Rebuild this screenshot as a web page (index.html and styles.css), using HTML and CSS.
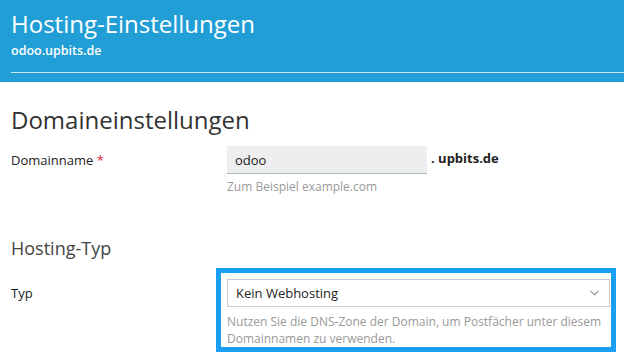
FILE: index.html
```html
<!DOCTYPE html>
<html lang="de">
<head>
    <meta charset="UTF-8">
    <title>Hosting-Einstellungen</title>
    <link rel="stylesheet" href="styles.css">
</head>
<body>
    <header class="pageHeader">
        <div class="headerInner">
            <h1>Hosting-Einstellungen</h1>
            <div class="subtitle">odoo.upbits.de</div>
        </div>
    </header>

    <main class="content">
        <h2 class="sectionTitle">Domaineinstellungen</h2>
        <div class="formRow">
            <label class="fieldLabel">Domainname <span class="required">*</span></label>
            <div class="fieldBox">
                <div class="domainLine">
                    <input class="textInput" type="text" value="odoo">
                    <span class="domainSuffix">. upbits.de</span>
                </div>
                <div class="hint">Zum Beispiel example.com</div>
            </div>
        </div>

        <h3 class="subTitle">Hosting-Typ</h3>
        <div class="formRow">
            <label class="fieldLabel">Typ</label>
            <div class="fieldBox highlighted">
                <div class="selectBox">
                    <span>Kein Webhosting</span>
                    <svg class="chevron" width="9" height="6" viewBox="0 0 9 6">
                        <path d="M0.5 0.8 L4.5 4.8 L8.5 0.8" fill="none" stroke="#888" stroke-width="1.1"/>
                    </svg>
                </div>
                <div class="hint selectHint">Nutzen Sie die DNS-Zone der Domain, um Postfächer unter diesem Domainnamen zu verwenden.</div>
            </div>
        </div>
    </main>
</body>
</html>
```

FILE: styles.css
```css
body {
    margin: 0;
    font-family: "Open Sans", "Noto Sans", sans-serif;
    color: #222;
    background: #fff;
}
.pageHeader {
    background-color: #229ed6;
    color: #fff;
    padding-top: 8px;
    padding-bottom: 9px;
}
.headerInner {
    margin-left: 11px;
    border-bottom: 1px solid #c9e3f1;
    padding-bottom: 12px;
}
.pageHeader h1 {
    font-size: 24px;
    font-weight: 400;
    line-height: 32px;
    margin: 0;
}
.pageHeader .subtitle {
    font-size: 12.5px;
    font-weight: 600;
    line-height: 18px;
    margin-top: 2px;
}
.content {
    padding: 0 8px 0 11px;
}
.sectionTitle {
    font-size: 24px;
    font-weight: 400;
    color: #333;
    margin: 22px 0 10px;
    line-height: 32px;
}
.subTitle {
    font-size: 18px;
    font-weight: 400;
    color: #444;
    margin: 40px 0 18px;
    line-height: 26px;
}
.formRow {
    display: grid;
    grid-template-columns: 216px 1fr;
}
.fieldLabel {
    font-size: 13px;
    line-height: 28px;
}
.required {
    color: #e0263c;
}
.domainLine {
    display: flex;
    align-items: center;
}
.textInput {
    width: 200px;
    height: 28px;
    box-sizing: border-box;
    border: none;
    border-bottom: 1px solid #a9bcc6;
    background: #eeeeee;
    font-family: inherit;
    font-size: 13px;
    color: #222;
    padding: 0 8px;
    margin: 0;
}
.domainSuffix {
    font-size: 13px;
    font-weight: 700;
    margin-left: 4px;
    margin-top: -5px;
}
.hint {
    font-size: 12px;
    color: #999;
    line-height: 17px;
    margin-top: 4px;
}
.selectHint {
    margin-top: 6px;
}
.highlighted {
    margin-left: -11px;
    margin-top: -11px;
    border: 5px solid #1a9ff0;
    padding: 6px 1px 0 6px;
}
.selectBox {
    height: 28px;
    box-sizing: border-box;
    border: 1px solid #cccccc;
    display: flex;
    align-items: center;
    justify-content: space-between;
    padding: 0 10px 0 8px;
    font-size: 13px;
}
```
